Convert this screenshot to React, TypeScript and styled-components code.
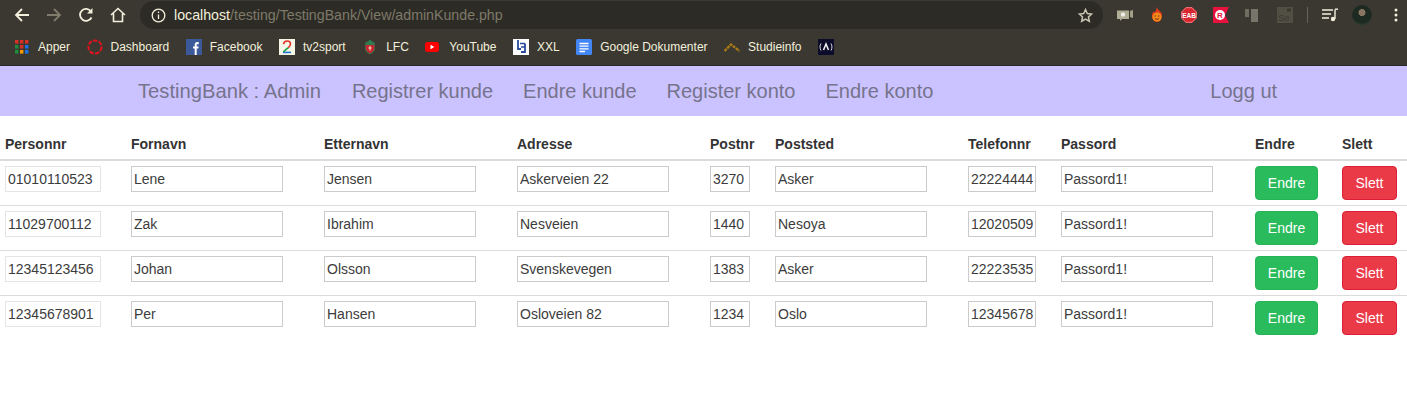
import React from "react";
import styled, { createGlobalStyle } from "styled-components";

const customers = [
  ["01010110523", "Lene", "Jensen", "Askerveien 22", "3270", "Asker", "22224444", "Passord1!"],
  ["11029700112", "Zak", "Ibrahim", "Nesveien", "1440", "Nesoya", "12020509", "Passord1!"],
  ["12345123456", "Johan", "Olsson", "Svenskevegen", "1383", "Asker", "22223535", "Passord1!"],
  ["12345678901", "Per", "Hansen", "Osloveien 82", "1234", "Oslo", "12345678", "Passord1!"],
];

const headers = ["Personnr", "Fornavn", "Etternavn", "Adresse", "Postnr", "Poststed", "Telefonnr", "Passord", "Endre", "Slett"];
const inputWidths = [96, 152, 152, 152, 40, 152, 68, 152];

const bookmarks: [string, React.ReactNode][] = [
  [
    "Apper",
    <svg width="15" height="16" viewBox="0 0 15 16">
      {[
        ["#d93025", "#d93025", "#d93025"],
        ["#1e8e3e", "#d93025", "#1a73e8"],
        ["#1e8e3e", "#f29900", "#1a73e8"],
      ].map((row, y) =>
        row.map((fill, x) => <rect key={`${x}-${y}`} x={x * 5} y={y * 5 + 1} width="3.4" height="3.6" fill={fill} />)
      )}
    </svg>,
  ],
  [
    "Dashboard",
    <svg width="16" height="16" viewBox="0 0 16 16">
      <circle cx="8" cy="8" r="6.6" fill="none" stroke="#e0141e" strokeWidth="2" strokeDasharray="4.4 1.4" />
    </svg>,
  ],
  [
    "Facebook",
    <svg width="16" height="16" viewBox="0 0 16 16">
      <rect width="16" height="16" fill="#3b5998" />
      <path d="M8.7 16V9.6H7V7.4h1.7V5.9c0-1.9 1-2.8 2.6-2.8h1.4v2.2h-1c-.8 0-1 .4-1 1v1.1h2l-.3 2.2h-1.700V16z" fill="#fff" />
    </svg>,
  ],
  [
    "tv2sport",
    <svg width="16" height="16" viewBox="0 0 16 16">
      <rect width="16" height="16" fill="#f4f6e6" />
      <path d="M4.500 5.200C4.800 3 6.500 2 8.200 2c2 0 3.300 1.200 3.300 3 0 1.500-1 2.600-2.300 3.800" fill="none" stroke="#e0352b" strokeWidth="1.600" />
      <path d="M9.200 8.800C7.500 10.300 5.500 11.500 4.500 13" fill="none" stroke="#18a33c" strokeWidth="1.600" />
      <path d="M4 13.400h8" stroke="#2276c9" strokeWidth="1.600" />
    </svg>,
  ],
  [
    "LFC",
    <svg width="16" height="16" viewBox="0 0 16 16">
      <path d="M8 0.500l2 2 2.500 1 .5 7c-1 2.500-3 3.500-5 5-2-1.500-4-2.500-5-5l.5-7 2.500-1z" fill="#2f7d4f" />
      <path d="M3.500 6h9l-.4 4.500C11.300 12.500 9.500 13.500 8 14.500 6.500 13.500 4.700 12.500 3.900 10.500z" fill="#c8242f" />
      <path d="M8 7v4.500M6.500 9h3" stroke="#f2e6c4" strokeWidth="1" />
    </svg>,
  ],
  [
    "YouTube",
    <svg width="16" height="16" viewBox="0 0 16 16">
      <rect x="0" y="3" width="14" height="10" rx="2.500" fill="#f00" />
      <path d="M5.500 5.800v4.400L9.300 8z" fill="#fff" />
    </svg>,
  ],
  [
    "XXL",
    <svg width="16" height="16" viewBox="0 0 16 16">
      <rect width="16" height="16" fill="#fff" />
      <path d="M5 1v9h3M12 4.500V13H8" fill="none" stroke="#2a4a9c" strokeWidth="1.800" />
      <path d="M7 4.500h5M8 8h4" stroke="#2a4a9c" strokeWidth="1.500" />
    </svg>,
  ],
  [
    "Google Dokumenter",
    <svg width="16" height="16" viewBox="0 0 16 16">
      <rect width="16" height="16" rx="1.500" fill="#4285f4" />
      <path d="M3.500 4.500h9M3.500 7.200h9M3.500 9.900h9M3.500 12.500h5.500" stroke="#fff" strokeWidth="1.300" />
    </svg>,
  ],
  [
    "Studieinfo",
    <svg width="16" height="16" viewBox="0 0 16 16">
      <path d="M0.500 12L7 5.500l8.500 6.500" fill="none" stroke="#a97a14" strokeWidth="2.400" strokeDasharray="3 0.800" />
    </svg>,
  ],
  [
    "",
    <svg width="16" height="16" viewBox="0 0 16 16">
      <rect width="16" height="16" fill="#0d0d2b" />
      <path d="M3 4.500C1.700 6.500 1.700 9.500 3 11.500M13 4.500c1.300 2 1.300 5 0 7" fill="none" stroke="#d8d8d8" strokeWidth="1" />
      <path d="M5.500 11L8 5l2.500 6" fill="none" stroke="#f4f4f4" strokeWidth="1.500" />
    </svg>,
  ],
];

const GlobalStyle = createGlobalStyle`
  html, body {
    margin: 0;
    padding: 0;
    background: #fff;
    font-family: "Liberation Sans", Arial, sans-serif;
  }
`;

const Page = styled.div`
  width: 1407px;
  height: 402px;
  overflow: hidden;
`;

const Browser = styled.div`
  height: 66px;
  background: #3b3832;
  border-bottom: 1px solid #2b2925;
  box-sizing: border-box;
`;

const Toolbar = styled.div`
  height: 29px;
  display: flex;
  align-items: center;
  padding-left: 14px;
`;

const NavIcons = styled.div`
  display: flex;
  align-items: center;
  gap: 16px;
  width: 126px;
  flex-shrink: 0;
`;

const Omnibox = styled.div`
  width: 963px;
  height: 28px;
  margin-top: 1px;
  border-radius: 14px;
  background: #2d2b26;
  display: flex;
  align-items: center;
  padding: 0 10px 0 11px;
  box-sizing: border-box;
  flex-shrink: 0;
`;

const Url = styled.div`
  flex: 1;
  margin-left: 8px;
  font-size: 14.2px;
  color: #7d7a68;
`;

const Host = styled.span`
  color: #f2f0dc;
`;

const Extensions = styled.div`
  display: flex;
  align-items: center;
  margin-left: 14px;
  gap: 16px;
`;

const Separator = styled.div`
  width: 1px;
  height: 16px;
  background: #66635a;
  margin: 0 -2px;
`;

const Avatar = styled.div`
  width: 20px;
  height: 20px;
  border-radius: 50%;
  background: radial-gradient(circle at 50% 38%, #8a7560 0 20%, #1d2a22 24% 62%, #2c5a3c 100%);
  margin: 0 6px 0 -2px;
`;

const Bookmarks = styled.div`
  height: 36px;
  display: flex;
  align-items: center;
  padding-left: 15px;
  gap: 16.5px;
`;

const Bookmark = styled.div`
  display: flex;
  align-items: center;
  gap: 8px;
  font-size: 12px;
  color: #f2f0dc;
  white-space: nowrap;
`;

const Nav = styled.nav`
  height: 50px;
  background: #cbc3ff;
  display: flex;
  align-items: center;
  padding-left: 138px;
  gap: 30px;
  font-size: 20px;
  color: #76738c;
`;

const Brand = styled.span`
  font-size: 20.2px;
  margin-right: 1px;
`;

const LogOut = styled.a`
  margin-left: 247px;
`;

const Table = styled.div`
  margin-top: 13px;
`;

const Row = styled.div`
  display: grid;
  grid-template-columns: 126px 193px 193px 193px 65px 193px 93px 194px 87px 65px;
  padding: 5px 0 0 5px;
  align-items: start;
  height: 39px;
  border-bottom: 1px solid #dcdcdc;
  &:last-child {
    border-bottom: none;
  }
`;

const HeadRow = styled(Row)`
  height: 26px;
  padding-top: 4px;
  border-bottom: 2px solid #dcdcdc;
`;

const HeadCell = styled.div`
  font-size: 14px;
  line-height: 22px;
  font-weight: bold;
  color: #333;
`;

const Field = styled.input<{ $width: number; $light?: boolean }>`
  width: ${(p) => p.$width}px;
  height: 26px;
  box-sizing: border-box;
  padding: 0 2px;
  border: 1px solid ${(p) => (p.$light ? "#e4e4e4" : "#cbcbcb")};
  background: #fff;
  font-family: inherit;
  font-size: 14px;
  color: #3c3c3c;
  outline: none;
`;

const Action = styled.button<{ $danger?: boolean }>`
  height: 34px;
  box-sizing: border-box;
  border-radius: 4px;
  border: 1px solid ${(p) => (p.$danger ? "#dc1f36" : "#25b356")};
  background: ${(p) => (p.$danger ? "#ea3a47" : "#29bb5c")};
  color: #fff;
  font-family: inherit;
  font-size: 14px;
  padding: 0;
  width: ${(p) => (p.$danger ? "55px" : "63px")};
`;

const cream = "#f2f0dc";

const App: React.FC = () => {
  return (
    <Page>
      <GlobalStyle />
      <Browser>
        <Toolbar>
          <NavIcons>
            <svg width="16" height="16" viewBox="0 0 16 16" fill="none" stroke={cream} strokeWidth="1.800">
              <path d="M15 8H2M8 2L2 8l6 6" />
            </svg>
            <svg width="16" height="16" viewBox="0 0 16 16" fill="none" stroke="#7f7c6c" strokeWidth="1.800">
              <path d="M1 8h13M8 2l6 6-6 6" />
            </svg>
            <svg width="16" height="16" viewBox="0 0 16 16" fill="none" stroke={cream} strokeWidth="1.800">
              <path d="M13.500 10.500A6 6 0 1 1 13 4.500" />
              <path d="M14.500 1v5.500H9z" fill={cream} stroke="none" />
            </svg>
            <svg width="16" height="16" viewBox="0 0 16 16" fill="none" stroke={cream} strokeWidth="1.600">
              <path d="M1 8l7-6.500L15 8M3.500 6.500V14.500h9V6.500" />
            </svg>
          </NavIcons>
          <Omnibox>
            <svg width="15" height="15" viewBox="0 0 15 15" fill="none" stroke={cream} strokeWidth="1.300">
              <circle cx="7.500" cy="7.500" r="6.300" />
              <path d="M7.500 6.500v4.500M7.500 3.500v1.600" />
            </svg>
            <Url>
              <Host>localhost</Host>/testing/TestingBank/View/adminKunde.php
            </Url>
            <svg width="15" height="15" viewBox="0 0 24 24" fill="none" stroke="#c9c7b2" strokeWidth="2.400">
              <path d="M12 2.500l2.900 6.300 6.900.8-5.100 4.700 1.400 6.800-6.100-3.400-6.100 3.400 1.400-6.800L2.200 9.600l6.900-.8z" />
            </svg>
          </Omnibox>
          <Extensions>
            <svg width="16" height="16" viewBox="0 0 16 16">
              <path d="M0 3.500h12v8.500H5l-2 2v-2H0z" fill="#b0ae94" />
              <path d="M13 4l3-1v8l-3-1z" fill="#a3a189" />
              <rect x="4" y="5.500" width="4" height="4" rx="1.500" fill="#eee" />
            </svg>
            <svg width="16" height="16" viewBox="0 0 16 16">
              <path d="M8 0c.5 2.500 2 3 3 4.500 1 .5 1.800 2 2 3 .5 4-2 7.500-5 7.500s-5.500-3.500-5-7.500c.2-1.500 1-2.500 2-3 .5.500 1 1 1 1.500C6 4.500 7.500 2.500 8 0z" fill="#e2361a" />
              <circle cx="8" cy="10" r="4.600" fill="#f08a1d" />
              <path d="M5.500 9h1.500M9 9h1.500M6 11.500c1 1 3 1 4 0" stroke="#8a2a0c" strokeWidth="1" fill="none" />
            </svg>
            <svg width="16" height="16" viewBox="0 0 16 16">
              <path d="M5 0h6l5 5v6l-5 5H5l-5-5V5z" fill="#d9252e" />
              <path d="M5 .7h6L15.300 5v6L11 15.300H5L.7 11V5z" fill="none" stroke="#f4a9a9" strokeWidth=".7" />
              <text x="8" y="10.500" fontSize="6.500" fontWeight="bold" fill="#fff" textAnchor="middle" fontFamily="Liberation Sans">EAB</text>
            </svg>
            <svg width="16" height="16" viewBox="0 0 16 16">
              <path d="M0 0h16l-4 8 4 8H0z" fill="#e8123f" />
              <circle cx="7" cy="8" r="5" fill="#fff" />
              <text x="7" y="11" fontSize="8" fontWeight="bold" fill="#e8123f" textAnchor="middle" fontFamily="Liberation Sans">R</text>
            </svg>
            <svg width="16" height="16" viewBox="0 0 16 16">
              <rect x="0" y="2" width="4" height="8" fill="#6f6c60" />
              <rect x="6" y="2" width="7" height="13" fill="#77746a" />
            </svg>
            <svg width="16" height="16" viewBox="0 0 16 16">
              <rect width="16" height="16" fill="#514f43" />
              <rect x="10" y="1.500" width="4" height="3" fill="#3b3832" />
              <text x="1" y="14" fontSize="9.500" fill="#3b3832" fontFamily="Liberation Sans">Se</text>
            </svg>
            <Separator />
            <svg width="16" height="14" viewBox="0 0 16 14" fill="none" stroke={cream} strokeWidth="1.400">
              <path d="M0 2h11M0 6h9M0 10h7" />
              <path d="M13 1.500V11" />
              <path d="M13 1.200h3" />
              <circle cx="11" cy="11" r="2.200" fill={cream} stroke="none" />
            </svg>
            <Avatar />
            <svg width="4" height="14" viewBox="0 0 4 14" fill={cream}>
              <circle cx="2" cy="2" r="1.500" />
              <circle cx="2" cy="7" r="1.500" />
              <circle cx="2" cy="12" r="1.500" />
            </svg>
          </Extensions>
        </Toolbar>
        <Bookmarks>
          {bookmarks.map(([label, icon], i) => (
            <Bookmark key={i}>
              {icon}
              {label}
            </Bookmark>
          ))}
        </Bookmarks>
      </Browser>
      <Nav>
        <Brand>TestingBank : Admin</Brand>
        <span>Registrer kunde</span>
        <span>Endre kunde</span>
        <span>Register konto</span>
        <span>Endre konto</span>
        <LogOut>Logg ut</LogOut>
      </Nav>
      <Table>
        <HeadRow>
          {headers.map((h) => (
            <HeadCell key={h}>{h}</HeadCell>
          ))}
        </HeadRow>
        {customers.map((customer) => (
          <Row key={customer[0]}>
            {customer.map((value, c) => (
              <Field key={c} defaultValue={value} $light={c === 0} $width={inputWidths[c]} />
            ))}
            <Action>Endre</Action>
            <Action $danger>Slett</Action>
          </Row>
        ))}
      </Table>
    </Page>
  );
};

export default App;
